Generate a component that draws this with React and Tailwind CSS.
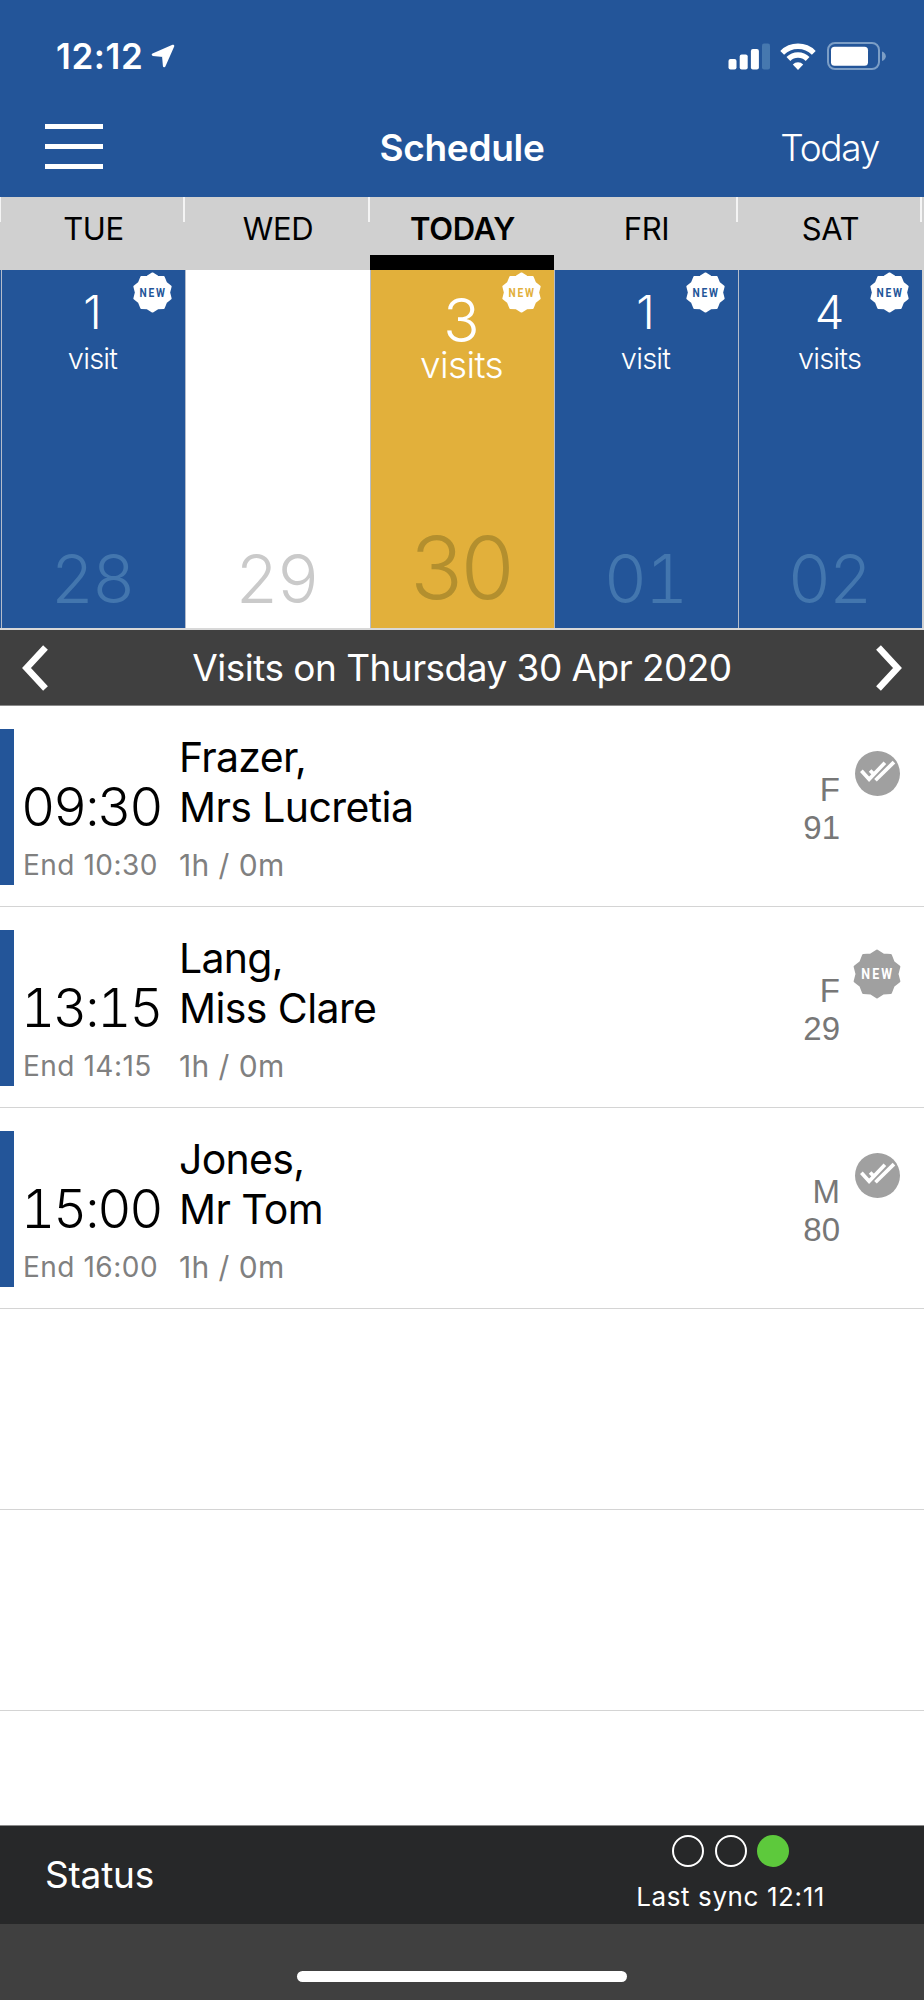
import clsx from "clsx";

const days = [
  { name: "TUE", date: "28", count: 1, label: "visit" },
  { name: "WED", date: "29", count: 0 },
  { name: "TODAY", date: "30", count: 3, label: "visits", today: true },
  { name: "FRI", date: "01", count: 1, label: "visit" },
  { name: "SAT", date: "02", count: 4, label: "visits" },
];

const visits = [
  { start: "09:30", end: "10:30", last: "Frazer,", first: "Mrs Lucretia", sex: "F", age: 91, status: "done" },
  { start: "13:15", end: "14:15", last: "Lang,",   first: "Miss Clare",   sex: "F", age: 29, status: "new"  },
  { start: "15:00", end: "16:00", last: "Jones,",  first: "Mr Tom",       sex: "M", age: 80, status: "done" },
];

// 10-pointed seal, tips at r=23.3 and valleys at r=20.3
const sealPoints = Array.from({ length: 20 }, (_, i) => {
  const r = i % 2 ? 20.3 : 23.3;
  const a = (i * Math.PI) / 10;
  return `${(r * Math.sin(a)).toFixed(2)},${(-r * Math.cos(a)).toFixed(2)}`;
}).join(" ");

function NewBadge({ className, textClass }) {
  return (
    <svg viewBox="-25 -25 50 50" className={className}>
      <polygon points={sealPoints} fill="currentColor" stroke="currentColor" strokeWidth="2.4" strokeLinejoin="round" />
      <text
        x="1"
        y="5.4"
        textAnchor="middle"
        fontSize="15"
        fontWeight="700"
        letterSpacing="2.6"
        transform="scale(0.83 1)"
        className={clsx("font-['Roboto',sans-serif]", textClass)}
      >
        NEW
      </text>
    </svg>
  );
}

function DoneBadge() {
  return (
    <svg viewBox="-67 -67 134 134" className="w-[45px] h-[45px]">
      <circle r="67" fill="#a0a0a0" />
      <g fill="none" stroke="#fff" strokeWidth="11">
        <path d="M-48 -8 L-25 17 L22 -32" />
        <path d="M-6 20 L49 -34" />
        <path d="M-22 -9 L-12 1" />
      </g>
    </svg>
  );
}

function StatusBar() {
  return (
    <div className="h-[100px] pt-3 pl-[56px] pr-[38px] flex items-center justify-between text-white">
      <div className="flex items-center gap-[8px]">
        <span className="text-[35px] leading-none font-semibold tracking-[0.6px]">12:12</span>
        <svg viewBox="0 0 24 24" className="w-6 h-6">
          <path d="M22 2 L2 10.6 L12.3 11.7 L13.2 22 Z" fill="#fff" stroke="#fff" strokeWidth="2.6" strokeLinejoin="round" />
        </svg>
      </div>
      <div className="flex items-center gap-[10px]">
        <svg viewBox="0 0 42 27" className="w-[42px] h-[27px]">
          <rect x="0.5" y="16" width="8" height="10.5" rx="2" fill="#fff" />
          <rect x="11.7" y="11.5" width="8" height="15" rx="2" fill="#fff" />
          <rect x="22.9" y="6" width="8" height="20.5" rx="2" fill="#fff" />
          <rect x="34" y="0.5" width="8" height="26" rx="2" fill="#4678af" />
        </svg>
        <svg viewBox="0 0 36 27" className="w-9 h-[27px]">
          <g fill="none" stroke="#fff" strokeWidth="5.4">
            <path d="M2.2 9.8 A22.5 22.5 0 0 1 33.8 9.8" />
            <path d="M8.4 16 A13.6 13.6 0 0 1 27.6 16" />
          </g>
          <path d="M18 27 L12.8 21.4 A7.4 7.4 0 0 1 23.2 21.4 Z" fill="#fff" />
        </svg>
        <svg viewBox="0 0 60 28" className="w-[60px] h-7">
          <rect x="2" y="1" width="51" height="26" rx="7" fill="none" stroke="#7c9ec6" strokeWidth="2" />
          <rect x="5" y="4.7" width="37" height="19" rx="3.5" fill="#fff" />
          <path d="M56 9.5 Q59.8 11 59.8 14.2 Q59.8 17.5 56 19 Z" fill="#7c9ec6" />
        </svg>
      </div>
    </div>
  );
}

function Header() {
  return (
    <div className="h-[97px] pb-px px-[45px] grid grid-cols-[1fr_auto_1fr] items-center text-white text-[37px] leading-[48px]">
      <div className="flex flex-col gap-[15px] w-[58px] pb-[4px]">
        <div className="h-[5px] bg-white" />
        <div className="h-[5px] bg-white" />
        <div className="h-[5px] bg-white" />
      </div>
      <h1 className="font-semibold tracking-[-0.3px]">Schedule</h1>
      <span className="text-right font-light tracking-[-1.3px]">Today</span>
    </div>
  );
}

function DayColumn({ name, date, count, label, today }) {
  return (
    <div className={clsx("shrink-0 flex flex-col", name === "WED" ? "w-[185px]" : "w-[184px]")}>
      <div className="h-[73px] bg-[#d0d0d0] flex flex-col justify-between relative">
        {name !== "FRI" && <div className="absolute top-0 -left-[2px] w-[2px] h-[25px] bg-[#f4f4f4]" />}
        <div className={clsx("pt-[11px] pl-px text-center leading-[42px] text-[31px] text-black tracking-[-0.4px]", today && "font-semibold")}>
          {name}
        </div>
        {today && <div className="h-[15px] bg-black" />}
      </div>
      <div
        className={clsx(
          "h-[358px] pr-[2px] relative border-l border-[#b4bccb] flex flex-col justify-between text-center font-light text-white",
          today ? "bg-[#e2b03b]" : count ? "bg-[#235599]" : "bg-white",
        )}
      >
        {count > 0 && <NewBadge className="absolute top-[2px] right-[12px] w-[41px] h-[41px]" textClass={today ? "fill-[#e2b03b]" : "fill-[#235599]"} />}
        {count > 0 ? (
          <div className={today ? "pt-[20px]" : "pt-[17px]"}>
            <div className={today ? "text-[60px] leading-[60px]" : "text-[47px] leading-[50px]"}>{count}</div>
            <div className={today ? "text-[37px] leading-[30px] tracking-[-0.6px]" : "text-[29px] leading-[44px] tracking-[-0.8px]"}>{label}</div>
          </div>
        ) : <div />}
        <div
          className={clsx(
            "tabular-nums",
            today
              ? "text-[87px] leading-[90px] pb-[15px] pr-[4px] text-[#b38f2e] tracking-[-6px]"
              : "text-[67px] leading-[70px] pb-[14px] pr-px tracking-[-2px]",
            !today && (count ? "text-[#4376ae]" : "text-[#cacaca]"),
          )}
        >
          {date}
        </div>
      </div>
    </div>
  );
}

function DateBar() {
  return (
    <div className="h-[76px] bg-[#404040] flex items-center justify-between px-[22px] text-white border-b border-[#8a8a8a]">
      <svg viewBox="0 0 26 46" className="w-[26px] h-[46px]">
        <path d="M23.5 2.5 L4.5 23 L23.5 43.5" fill="none" stroke="#fff" strokeWidth="6.5" />
      </svg>
      <span className="text-[37px] leading-none tracking-[-0.53px]">Visits on Thursday 30 Apr 2020</span>
      <svg viewBox="0 0 26 46" className="w-[26px] h-[46px]">
        <path d="M2.5 2.5 L21.5 23 L2.5 43.5" fill="none" stroke="#fff" strokeWidth="6.5" />
      </svg>
    </div>
  );
}

function VisitRow({ visit }) {
  return (
    <div className="h-[201px] border-b border-[#d4d4d4] flex">
      <div className="w-[14px] h-[156px] mt-[23px] bg-[#235599]" />
      <div className="w-[165px] pt-[76px] pl-[7px] whitespace-nowrap">
        <div className="text-[53px] leading-[50px] font-light text-black tracking-[-2.2px] tabular-nums">{visit.start}</div>
        <div className="mt-[14px] pl-[2px] text-[28px] leading-[38px] tracking-[0.5px] text-[#808080]">End {visit.end}</div>
      </div>
      <div className="flex-1 pt-[26px] text-black">
        <div className="text-[41px] leading-[50px] tracking-[-0.7px]">{visit.last}</div>
        <div className="text-[41px] leading-[50px] tracking-[-0.6px]">{visit.first}</div>
        <div className="mt-[13px] text-[30px] leading-[40px] tracking-[0.4px] text-[#808080]">1h / 0m</div>
      </div>
      <div className="pt-[65px] text-right text-[33px] leading-[38px] text-[#777] font-['Liberation_Sans',sans-serif]">
        <div>{visit.sex}</div>
        <div>{visit.age}</div>
      </div>
      <div className="w-[84px] pt-[42px] pr-[10px] flex justify-center items-start">
        {visit.status === "new"
          ? <NewBadge className="w-[50px] h-[50px] text-[#a0a0a0]" textClass="fill-white" />
          : <div className="pt-[3px]"><DoneBadge /></div>}
      </div>
    </div>
  );
}

function Footer() {
  return (
    <footer className="bg-[#404040] border-t border-[#8a8a8a]">
      <div className="h-[98px] bg-[#272829] text-white flex justify-between pl-[45px] pr-[99px]">
        <span className="text-[37px] leading-[98px] tracking-[-0.2px]">Status</span>
        <div className="flex flex-col items-center pt-[9px]">
          <div className="flex gap-[10.5px]">
            <div className="w-8 h-8 rounded-full border-2 border-white" />
            <div className="w-8 h-8 rounded-full border-2 border-white" />
            <div className="w-8 h-8 rounded-full bg-[#5dc93c]" />
          </div>
          <span className="mt-[10px] text-[26px] leading-[40px] tracking-[0.6px]">Last sync 12:11</span>
        </div>
      </div>
      <div className="h-[76px] pt-[47px]">
        <div className="mx-auto w-[330px] h-[11px] rounded-full bg-white" />
      </div>
    </footer>
  );
}

export default function App() {
  return (
    <div className="w-[924px] h-[2000px] overflow-hidden flex flex-col bg-white font-['Inter',sans-serif]">
      <div className="bg-[#235599]">
        <StatusBar />
        <Header />
      </div>

      {/* Week strip */}
      <div className="flex bg-[#235599] border-b-2 border-[#d8d8d8] overflow-hidden">
        <div className="w-px shrink-0">
          <div className="h-[73px] bg-[#d0d0d0]" />
        </div>
        {days.map((day) => <DayColumn key={day.name} {...day} />)}
        <div className="w-[2px] shrink-0 bg-[#d0d0d0] relative">
          <div className="absolute top-0 -left-[2px] w-[2px] h-[25px] bg-[#f4f4f4]" />
        </div>
      </div>

      <DateBar />

      {/* Visit list, padded out with blank rows */}
      <div className="flex-1 overflow-hidden">
        {visits.map((visit) => <VisitRow key={visit.start} visit={visit} />)}
        <div className="h-[201px] border-b border-[#d4d4d4]" />
        <div className="h-[201px] border-b border-[#d4d4d4]" />
      </div>

      <Footer />
    </div>
  );
}
